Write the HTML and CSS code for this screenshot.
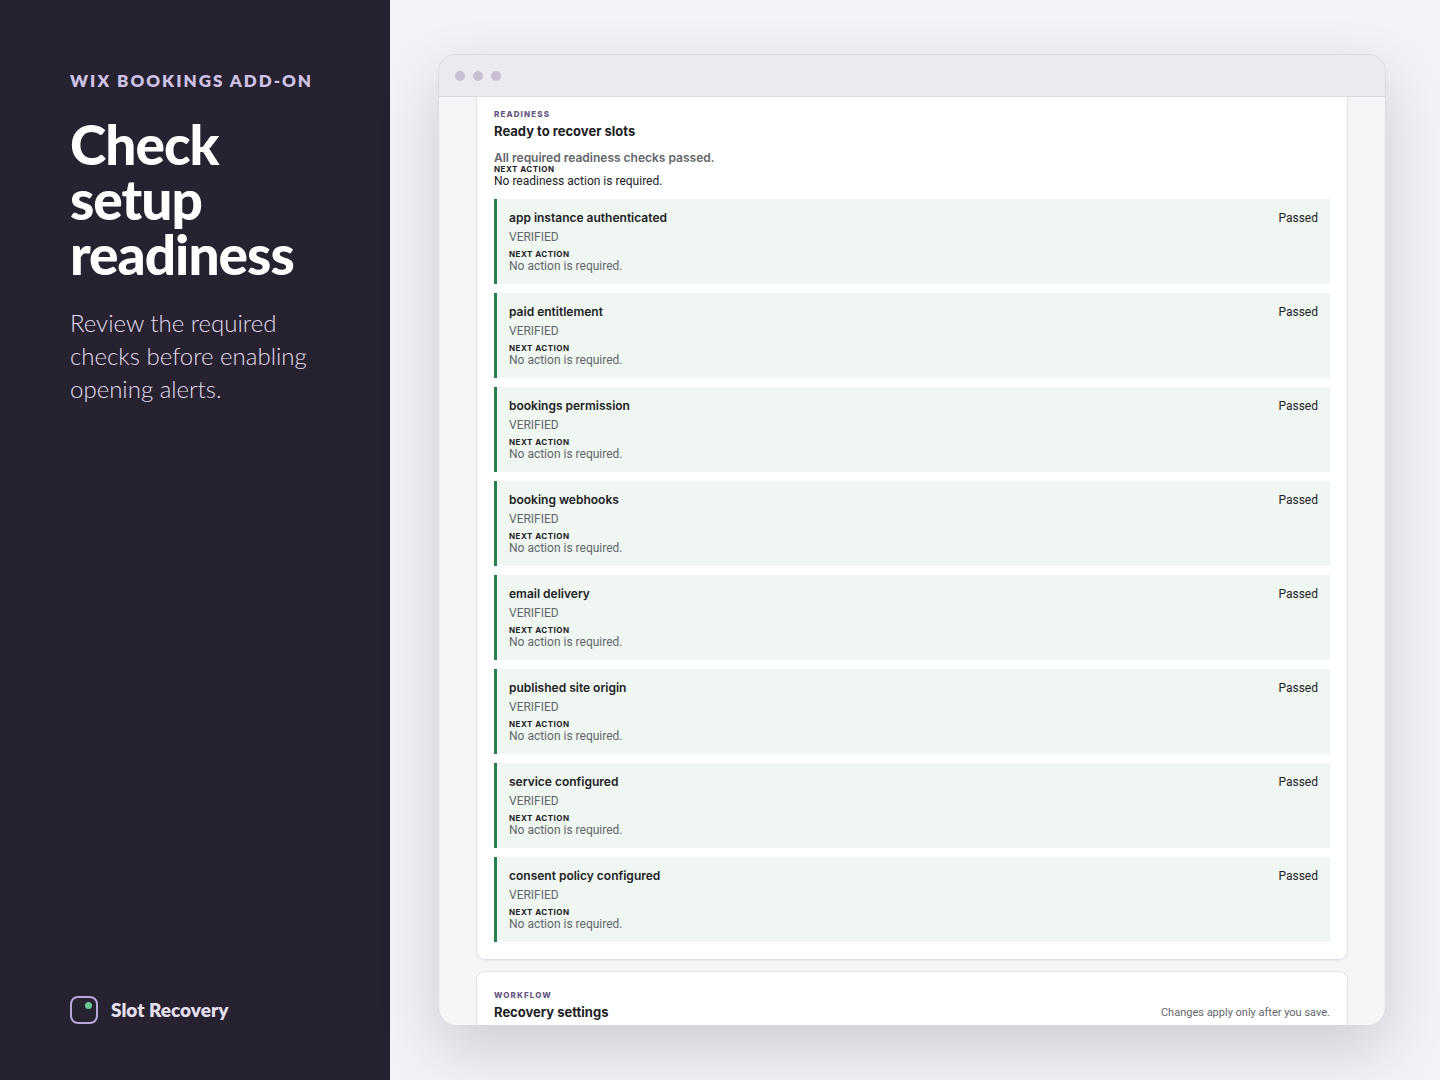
FILE: index.html
```html
<!DOCTYPE html>
<html lang="en">
<head>
  <meta charset="UTF-8">
  <meta name="viewport" content="width=device-width, initial-scale=1.0">
  <title>Slot Recovery</title>
  <link rel="stylesheet" href="styles.css">
</head>
<body>

  <aside class="intro">
    <p class="kicker">WIX BOOKINGS ADD-ON</p>
    <h1>Check setup readiness</h1>
    <p class="lead">Review the required checks before enabling opening alerts.</p>
    <div class="brand">
      <svg class="brand-mark" viewBox="0 0 28 28" aria-hidden="true">
        <rect x="1" y="1" width="26" height="26" rx="7" fill="none" stroke="#b9a7dc" stroke-width="2"/>
        <circle cx="18.5" cy="9.5" r="3.5" fill="#6cc596"/>
      </svg>
      <span>Slot Recovery</span>
    </div>
  </aside>

  <main class="stage">
    <div class="window">
      <div class="window-bar">
        <span class="dot"></span>
        <span class="dot"></span>
        <span class="dot"></span>
      </div>
      <div class="window-body">
        <section class="card card-top">
          <p class="label">READINESS</p>
          <h2>Ready to recover slots</h2>
          <div class="summary">
            <p class="summary-text">All required readiness checks passed.</p>
            <p class="next">NEXT ACTION</p>
            <p class="summary-action">No readiness action is required.</p>
          </div>
          <ul class="checks">
            <li class="check">
              <div>
                <h3>app instance authenticated</h3>
                <p class="status">VERIFIED</p>
                <p class="next">NEXT ACTION</p>
                <p class="action">No action is required.</p>
              </div>
              <span class="result">Passed</span>
            </li>
            <li class="check">
              <div>
                <h3>paid entitlement</h3>
                <p class="status">VERIFIED</p>
                <p class="next">NEXT ACTION</p>
                <p class="action">No action is required.</p>
              </div>
              <span class="result">Passed</span>
            </li>
            <li class="check">
              <div>
                <h3>bookings permission</h3>
                <p class="status">VERIFIED</p>
                <p class="next">NEXT ACTION</p>
                <p class="action">No action is required.</p>
              </div>
              <span class="result">Passed</span>
            </li>
            <li class="check">
              <div>
                <h3>booking webhooks</h3>
                <p class="status">VERIFIED</p>
                <p class="next">NEXT ACTION</p>
                <p class="action">No action is required.</p>
              </div>
              <span class="result">Passed</span>
            </li>
            <li class="check">
              <div>
                <h3>email delivery</h3>
                <p class="status">VERIFIED</p>
                <p class="next">NEXT ACTION</p>
                <p class="action">No action is required.</p>
              </div>
              <span class="result">Passed</span>
            </li>
            <li class="check">
              <div>
                <h3>published site origin</h3>
                <p class="status">VERIFIED</p>
                <p class="next">NEXT ACTION</p>
                <p class="action">No action is required.</p>
              </div>
              <span class="result">Passed</span>
            </li>
            <li class="check">
              <div>
                <h3>service configured</h3>
                <p class="status">VERIFIED</p>
                <p class="next">NEXT ACTION</p>
                <p class="action">No action is required.</p>
              </div>
              <span class="result">Passed</span>
            </li>
            <li class="check">
              <div>
                <h3>consent policy configured</h3>
                <p class="status">VERIFIED</p>
                <p class="next">NEXT ACTION</p>
                <p class="action">No action is required.</p>
              </div>
              <span class="result">Passed</span>
            </li>
          </ul>
        </section>

        <section class="card card-split">
          <div>
            <p class="label">WORKFLOW</p>
            <h2>Recovery settings</h2>
          </div>
          <p class="note">Changes apply only after you save.</p>
        </section>
      </div>
    </div>
  </main>

</body>
</html>
```
FILE: styles.css
```css
* {
  box-sizing: border-box;
}

body {
  margin: 0;
  height: 100vh;
  display: flex;
  background: #f4f2f8;
  color: #202124;
  font-family: Roboto, "Liberation Sans", sans-serif;
  font-size: 12px;
  line-height: 14px;
}

h1, h2, h3, p, ul {
  margin: 0;
  padding: 0;
}

/* left panel */
.intro {
  flex: 0 0 390px;
  display: flex;
  flex-direction: column;
  padding: 70px 70px 56px;
  background: #26222f;
  font-family: Lato, "Open Sans", sans-serif;
}

.kicker {
  color: #cdc2e6;
  font-size: 17px;
  font-weight: 800;
  line-height: 22px;
  letter-spacing: 2px;
  white-space: nowrap;
}

h1 {
  margin-top: 25px;
  color: #fff;
  font-size: 55px;
  font-weight: 900;
  line-height: 55px;
  letter-spacing: -1px;
}

.lead {
  margin-top: 24px;
  color: #e2dcee;
  font-size: 24px;
  font-weight: 300;
  line-height: 33px;
}

.brand {
  display: flex;
  align-items: center;
  gap: 13px;
  margin-top: auto;
  color: #e4dfee;
  font-size: 19px;
  font-weight: 800;
  line-height: 24px;
}

.brand-mark {
  width: 28px;
  height: 28px;
}

/* browser window */
.stage {
  flex: 1;
  min-width: 0;
  display: flex;
  padding: 54px 54px 55px 48px;
}

.window {
  flex: 1;
  min-width: 0;
  display: flex;
  flex-direction: column;
  overflow: hidden;
  background: #f6f6f9;
  border: 1px solid #dcd8e4;
  border-bottom: none;
  border-radius: 18px;
  box-shadow: 0 24px 60px rgba(38, 34, 47, 0.18);
}

.window-bar {
  flex: 0 0 42px;
  display: flex;
  align-items: center;
  gap: 8px;
  padding: 0 16px;
  background: #ece9f0;
  border-bottom: 1px solid #dcd8e4;
}

.dot {
  width: 10px;
  height: 10px;
  border-radius: 50%;
  background: #c8bfd3;
}

.window-body {
  flex: 1;
  min-height: 0;
  overflow: hidden;
  padding: 0 37px;
}

.card {
  padding: 17px;
  background: #fff;
  border: 1px solid #e1e1e8;
  border-radius: 9px;
  box-shadow: 0 1px 2px rgba(32, 33, 36, 0.06);
}

.card-top {
  padding-top: 11px;
  border-top: none;
  border-radius: 0 0 9px 9px;
}

.card-split {
  display: flex;
  justify-content: space-between;
  align-items: flex-end;
  margin-top: 11px;
}

.label,
.next,
.summary-text,
h2,
h3 {
  font-family: Inter, "Liberation Sans", sans-serif;
}

.label {
  color: #66557f;
  font-size: 8px;
  font-weight: 800;
  line-height: 12px;
  letter-spacing: 0.14em;
}

h2 {
  margin-top: 3px;
  font-size: 13px;
  font-weight: 700;
  line-height: 16px;
}

.summary {
  margin-top: 12px;
}

.summary-text {
  color: #62666b;
  font-weight: 600;
  line-height: 13px;
}

.next {
  font-size: 8px;
  font-weight: 700;
  line-height: 10px;
  letter-spacing: 0.06em;
}

.checks {
  display: grid;
  gap: 9px;
  margin-top: 11px;
  list-style: none;
}

.check {
  display: flex;
  justify-content: space-between;
  padding: 12px 12px 11px;
  background: #f0f6f2;
  border-left: 3px solid #28804f;
}

h3 {
  font-size: 12px;
  font-weight: 600;
  line-height: 14px;
}

.status {
  margin: 5px 0;
  color: #62666b;
}

.action {
  color: #62666b;
}

.note {
  color: #62666b;
  font-size: 11px;
}
```
